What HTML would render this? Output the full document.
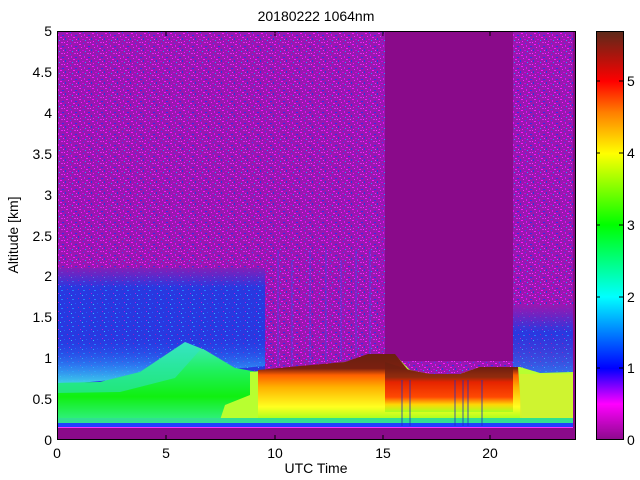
<!DOCTYPE html>
<html><head><meta charset="utf-8"><style>
html,body{margin:0;padding:0;background:#fff;}
svg{display:block;font-family:"Liberation Sans",Arial,sans-serif;}
</style></head><body>
<svg width="640" height="480" viewBox="0 0 640 480" xmlns="http://www.w3.org/2000/svg">
<defs>
<pattern id="sp" width="13" height="11" patternUnits="userSpaceOnUse">
<rect width="13" height="11" fill="#9818b0"/>
<rect x="1" y="0" width="2" height="1" fill="#ff10ff"/>
<rect x="6" y="1" width="1" height="2" fill="#e010f0"/>
<rect x="10" y="2" width="2" height="1" fill="#3030f0"/>
<rect x="3" y="3" width="1" height="1" fill="#ff20ff"/>
<rect x="8" y="4" width="2" height="1" fill="#ff10ff"/>
<rect x="0" y="5" width="1" height="2" fill="#2040e0"/>
<rect x="4" y="6" width="2" height="1" fill="#d000e0"/>
<rect x="11" y="6" width="1" height="1" fill="#ff20ff"/>
<rect x="7" y="7" width="1" height="1" fill="#20a0ff"/>
<rect x="2" y="8" width="1" height="1" fill="#ff10ff"/>
<rect x="9" y="9" width="2" height="1" fill="#e020f0"/>
<rect x="5" y="10" width="1" height="1" fill="#4040ff"/>
<rect x="12" y="9" width="1" height="1" fill="#ff30ff"/>
</pattern>
<pattern id="sb" width="11" height="9" patternUnits="userSpaceOnUse">
<rect width="11" height="9" fill="#2838e0"/>
<rect x="1" y="1" width="1" height="1" fill="#9020c0"/>
<rect x="6" y="2" width="2" height="1" fill="#2080ff"/>
<rect x="3" y="5" width="1" height="1" fill="#b020e0"/>
<rect x="9" y="6" width="1" height="1" fill="#2060ff"/>
<rect x="5" y="7" width="1" height="1" fill="#30c0ff"/>
</pattern>
<linearGradient id="cb" x1="0" y1="1" x2="0" y2="0">
<stop offset="0" stop-color="#8a0a8a"/>
<stop offset="0.088" stop-color="#ff00ff"/>
<stop offset="0.175" stop-color="#0000ff"/>
<stop offset="0.35" stop-color="#00ffff"/>
<stop offset="0.526" stop-color="#00ff00"/>
<stop offset="0.70" stop-color="#ffff00"/>
<stop offset="0.80" stop-color="#ff8000"/>
<stop offset="0.877" stop-color="#ff0000"/>
<stop offset="1" stop-color="#5a2a1a"/>
</linearGradient>
<linearGradient id="bl" x1="0" y1="0" x2="0" y2="1">
<stop offset="0" stop-color="#2040f0" stop-opacity="0"/>
<stop offset="0.6" stop-color="#2050f0" stop-opacity="0"/>
<stop offset="0.85" stop-color="#30a0f8" stop-opacity="0.7"/>
<stop offset="1" stop-color="#40d8e8"/>
</linearGradient>
<linearGradient id="fade" x1="0" y1="0" x2="0" y2="1">
<stop offset="0" stop-color="#9818b0"/>
<stop offset="1" stop-color="#9818b0" stop-opacity="0"/>
</linearGradient>
<linearGradient id="bl2" x1="0" y1="0" x2="0" y2="1">
<stop offset="0" stop-color="#9818b0"/>
<stop offset="0.4" stop-color="#9818b0" stop-opacity="0"/>
<stop offset="1" stop-color="#30a0f8" stop-opacity="0.6"/>
</linearGradient>
<linearGradient id="gr" x1="0" y1="0" x2="0" y2="1">
<stop offset="0" stop-color="#40e8c0"/>
<stop offset="0.35" stop-color="#20f060"/>
<stop offset="0.7" stop-color="#10f010"/>
<stop offset="1" stop-color="#30f080"/>
</linearGradient>
<linearGradient id="yl" x1="0" y1="0" x2="0" y2="1">
<stop offset="0" stop-color="#6a2010"/>
<stop offset="0.22" stop-color="#7a2010"/>
<stop offset="0.32" stop-color="#ff6000"/>
<stop offset="0.5" stop-color="#ffb000"/>
<stop offset="0.8" stop-color="#ffff20"/>
<stop offset="1" stop-color="#a0ff20"/>
</linearGradient>
<linearGradient id="rd" x1="0" y1="0" x2="0" y2="1">
<stop offset="0" stop-color="#6a2010"/>
<stop offset="0.3" stop-color="#7a2010"/>
<stop offset="0.4" stop-color="#e01000"/>
<stop offset="0.7" stop-color="#ff3000"/>
<stop offset="0.85" stop-color="#ffd000"/>
<stop offset="1" stop-color="#a0ff20"/>
</linearGradient>
</defs>
<rect x="57" y="31" width="517" height="409" fill="url(#sp)"/>
<!-- lower blue left -->
<rect x="57" y="268" width="208" height="119" fill="url(#sb)"/>
<rect x="57" y="268" width="208" height="20" fill="url(#fade)" opacity="0.8"/>
<path d="M57 268 L265 268 L265 366 L57 385 Z" fill="url(#bl)"/>
<g stroke="#3050f0" stroke-width="1" opacity="0.7">
<line x1="278" y1="250" x2="278" y2="366"/><line x1="292" y1="260" x2="292" y2="366"/><line x1="310" y1="250" x2="310" y2="364"/>
<line x1="326" y1="250" x2="326" y2="362"/><line x1="341" y1="260" x2="341" y2="360"/><line x1="356" y1="250" x2="356" y2="356"/>
<line x1="370" y1="250" x2="370" y2="356"/>
</g>
<!-- blue right -->
<rect x="513" y="305" width="60" height="70" fill="url(#sb)"/>
<rect x="513" y="305" width="60" height="70" fill="url(#bl2)"/>
<!-- solid purple region -->
<rect x="385" y="31" width="128" height="330" fill="#8a0a8a"/>
<!-- left green boundary layer -->
<path d="M57 383 L100 382 L140 372 L170 352 L185 342 L205 350 L235 368 L258 372 L258 420 L57 420 Z" fill="url(#gr)"/>
<path d="M57 383 L100 382 L140 372 L170 352 L185 342 L200 350 L175 378 L120 392 L57 393 Z" fill="#30e0c8" opacity="0.55"/>
<!-- yellow/orange aerosol -->
<path d="M250 372 L300 367 L345 362 L370 355 L395 355 L410 370 L430 374 L460 374 L480 367 L520 367 L540 373 L573 372 L573 420 L220 420 L225 405 L250 395 Z" fill="#b8ff30"/>
<path d="M258 370 L300 366 L345 362 L368 354 L395 354 L408 370 L430 374 L460 374 L480 367 L518 367 L522 420 L258 420 Z" fill="url(#yl)"/>
<path d="M385 362 L410 370 L430 374 L460 374 L480 367 L513 367 L513 412 L385 412 Z" fill="url(#rd)" opacity="0.85"/>
<rect x="520" y="374" width="53" height="46" fill="#d8f030" opacity="0.7"/>
<!-- bottom bands -->
<rect x="57" y="418" width="516" height="6" fill="#30e090"/>
<rect x="57" y="423" width="516" height="4" fill="#2040ff"/>
<rect x="57" y="427" width="516" height="1" fill="#ff30ff"/>
<rect x="57" y="428" width="517" height="12" fill="#8a0a8a"/>
<rect x="573" y="31" width="3" height="409" fill="#8a0a8a"/>
<g stroke="#2030c0" stroke-width="1" opacity="0.8">
<line x1="402" y1="380" x2="402" y2="426"/><line x1="410" y1="380" x2="410" y2="426"/>
<line x1="455" y1="380" x2="455" y2="426"/><line x1="463" y1="380" x2="463" y2="426"/>
<line x1="468" y1="380" x2="468" y2="426"/><line x1="482" y1="380" x2="482" y2="426"/>
</g>
<rect x="57.5" y="31.5" width="518" height="408" fill="none" stroke="#000" stroke-width="1"/>
<g stroke="#000" stroke-width="1">
<line x1="166" y1="440" x2="166" y2="435"/><line x1="275" y1="440" x2="275" y2="435"/><line x1="383" y1="440" x2="383" y2="435"/><line x1="490" y1="440" x2="490" y2="435"/>
<line x1="166" y1="31" x2="166" y2="36"/><line x1="275" y1="31" x2="275" y2="36"/><line x1="383" y1="31" x2="383" y2="36"/><line x1="490" y1="31" x2="490" y2="36"/>
</g>
<g font-size="14" fill="#000" text-anchor="end">
<text x="52" y="445">0</text><text x="52" y="404">0.5</text><text x="52" y="363">1</text><text x="52" y="322">1.5</text><text x="52" y="281">2</text><text x="52" y="241">2.5</text><text x="52" y="200">3</text><text x="52" y="159">3.5</text><text x="52" y="118">4</text><text x="52" y="77">4.5</text><text x="52" y="36">5</text>
</g>
<g font-size="14" fill="#000" text-anchor="middle">
<text x="57" y="458">0</text><text x="166" y="458">5</text><text x="275" y="458">10</text><text x="383" y="458">15</text><text x="490" y="458">20</text>
<text x="316" y="473">UTC Time</text>
<text x="316" y="21">20180222 1064nm</text>
</g>
<text transform="translate(18,235) rotate(-90)" font-size="14" text-anchor="middle">Altitude [km]</text>
<rect x="596" y="31" width="27" height="409" fill="url(#cb)"/>
<rect x="596.5" y="31.5" width="27" height="408" fill="none" stroke="#000"/>
<g stroke="#000"><line x1="596" y1="81" x2="600" y2="81"/><line x1="619" y1="81" x2="623" y2="81"/>
<line x1="596" y1="153" x2="600" y2="153"/><line x1="619" y1="153" x2="623" y2="153"/>
<line x1="596" y1="225" x2="600" y2="225"/><line x1="619" y1="225" x2="623" y2="225"/>
<line x1="596" y1="297" x2="600" y2="297"/><line x1="619" y1="297" x2="623" y2="297"/>
<line x1="596" y1="368" x2="600" y2="368"/><line x1="619" y1="368" x2="623" y2="368"/></g>
<g font-size="14" fill="#000"><text x="627" y="86">5</text><text x="627" y="158">4</text><text x="627" y="230">3</text><text x="627" y="302">2</text><text x="627" y="373">1</text><text x="627" y="445">0</text></g>
</svg>
</body></html>
